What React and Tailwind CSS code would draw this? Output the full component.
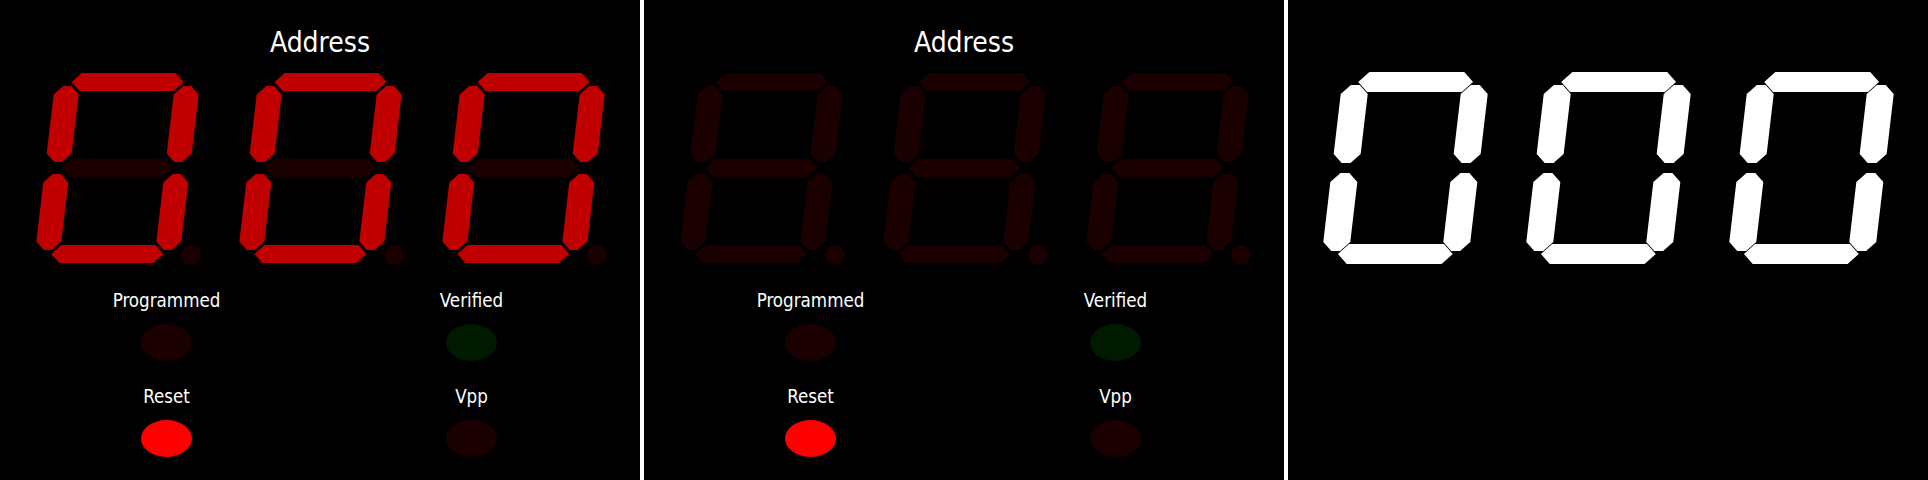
import React from "react";

const H = (cy) =>
  `-56,${cy} -47,${cy - 9} 47,${cy - 9} 56,${cy} 47,${cy + 9} -47,${cy + 9}`;
const V = (cx, y0, y1) =>
  `${cx - 4},${y0} ${cx + 4},${y0} ${cx + 12.5},${y0 + 8.5} ${cx + 12.5},${y1 - 8.5} ${cx + 4},${y1} ${cx - 4},${y1} ${cx - 12.5},${y1 - 8.5} ${cx - 12.5},${y0 + 8.5}`;

const SEGS = {
  a: H(-86),
  b: V(60, -82, -6),
  c: V(60, 6, 82),
  d: H(86),
  e: V(-60, 6, 82),
  f: V(-60, -82, -6),
  g: H(0),
};

function Digit({ lit, on, off, dpColor, stroke }) {
  return (
    <svg width="203" height="196" viewBox="0 0 203 196" className="block shrink-0">
      <g transform="translate(87.5 98) skewX(-6.73)">
        {Object.entries(SEGS).map(([k, pts]) => {
          const isOn = lit.includes(k);
          const fill = isOn ? on : off;
          if (fill === "none") return null;
          return (
            <polygon
              key={k}
              points={pts}
              fill={fill}
              stroke={isOn && stroke ? stroke : "none"}
              strokeWidth={isOn && stroke ? 2 : 0}
              strokeLinejoin="miter"
            />
          );
        })}
      </g>
      {dpColor !== "none" && <circle cx="161" cy="185" r="10" fill={dpColor} />}
    </svg>
  );
}

function Led({ color }) {
  return <div className="w-[51px] h-[37px] rounded-[50%]" style={{ backgroundColor: color }} />;
}

function LedCell({ label, color }) {
  return (
    <div className="flex flex-col items-center">
      <div className="text-[18.6px] leading-[18px] text-white whitespace-nowrap">{label}</div>
      <div className="mt-[14px]">
        <Led color={color} />
      </div>
    </div>
  );
}

const FONT =
  "font-['DejaVu_Sans_Condensed','DejaVu_Sans',sans-serif] font-stretch-condensed";

function ControlPanel({ segOn, segOff, lit }) {
  return (
    <div className={`w-[640px] h-[480px] bg-black shrink-0 pt-[29px] ${FONT}`}>
      <div className="text-center text-white text-[28px] leading-[28px]">Address</div>
      <div className="mt-[13px] ml-[30px] flex">
        {[0, 1, 2].map((i) => (
          <Digit key={i} lit={lit} on={segOn} off={segOff} dpColor={segOff} />
        ))}
      </div>
      <div className="mt-[26px] ml-[14px] grid grid-cols-[305px_305px] gap-y-[27px]">
        <LedCell label="Programmed" color="#1a0000" />
        <LedCell label="Verified" color="#001a00" />
        <LedCell label="Reset" color="#ff0000" />
        <LedCell label="Vpp" color="#1a0000" />
      </div>
    </div>
  );
}

export default function App() {
  return (
    <div className="w-[1928px] h-[480px] bg-black flex overflow-hidden">
      <ControlPanel segOn="#c00000" segOff="#1a0000" lit={["a", "b", "c", "d", "e", "f"]} />
      <div className="w-[4px] h-[480px] bg-white shrink-0" />
      <ControlPanel segOn="#1a0000" segOff="#1a0000" lit={[]} />
      <div className="w-[4px] h-[480px] bg-white shrink-0" />
      <div className="w-[640px] h-[480px] bg-black shrink-0 pt-[70px]">
        <div className="ml-[30px] flex">
          {[0, 1, 2].map((i) => (
            <Digit
              key={i}
              lit={["a", "b", "c", "d", "e", "f"]}
              on="#ffffff"
              off="none"
              dpColor="none"
              stroke="#ffffff"
            />
          ))}
        </div>
      </div>
    </div>
  );
}
